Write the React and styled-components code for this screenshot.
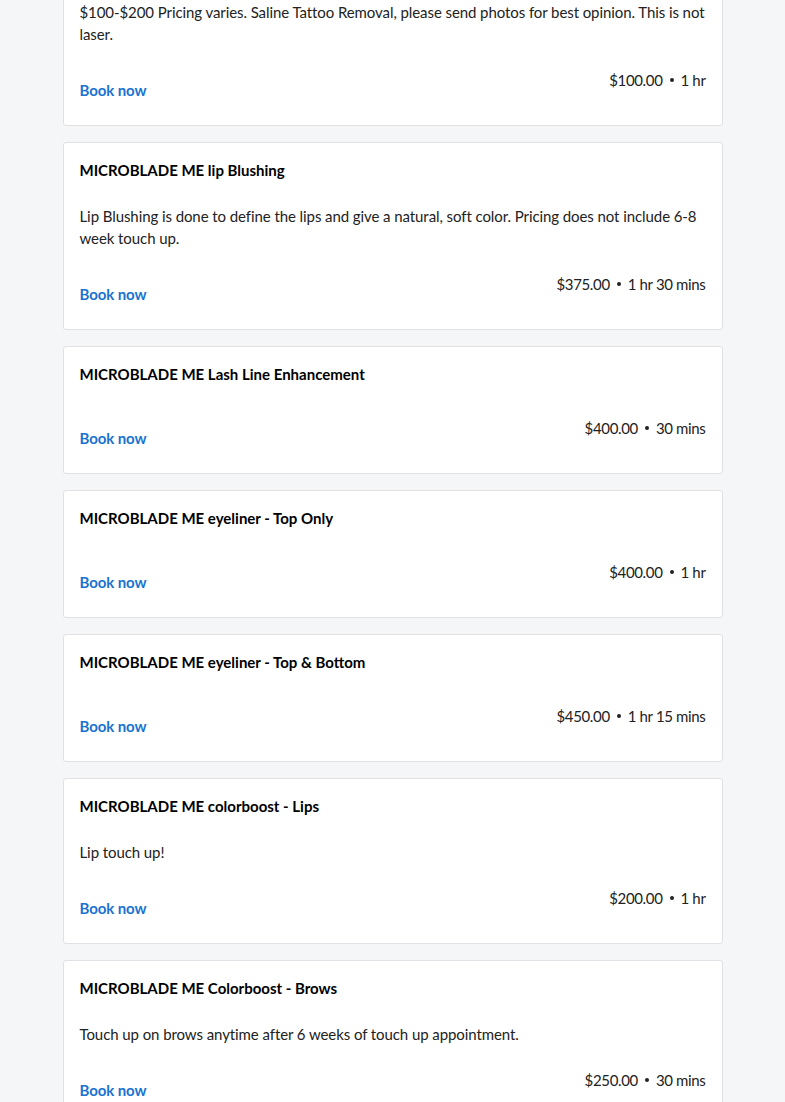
import React from "react";
import styled, { createGlobalStyle } from "styled-components";

const GlobalStyle = createGlobalStyle`
  html, body { margin: 0; padding: 0; background: #f5f6f7; }
  body { font-family: "Lato", "Noto Sans", sans-serif; color: #1a1a1a; -webkit-font-smoothing: antialiased; }
  * { box-sizing: border-box; }
`;

const Page = styled.main`
  background: #f5f6f7;
  min-height: 1102px;
  overflow: hidden;
`;

const List = styled.div`
  width: 660px;
  margin: -62px auto 0;
  display: flex;
  flex-direction: column;
  gap: 16px;
  padding-bottom: 40px;
`;

const Card = styled.section`
  display: flex;
  flex-direction: column;
  background: #ffffff;
  border: 1px solid #dfe1e5;
  border-radius: 3px;
  padding: 16px 16px 25px;
`;

const Title = styled.h3`
  margin: 0 0 8px;
  font-size: 15px;
  line-height: 22px;
  font-weight: 700;
  color: #000;
`;

const Description = styled.p`
  margin: 16px 0 0;
  font-size: 15px;
  line-height: 22px;
  letter-spacing: -0.08px;
  color: #222;
`;

const Footer = styled.div`
  margin-top: 25px;
  display: flex;
  justify-content: space-between;
  align-items: flex-start;
`;

const BookButton = styled.button`
  margin-top: 10px;
  padding: 0;
  border: none;
  background: none;
  font-family: inherit;
  font-size: 15px;
  line-height: 20px;
  font-weight: 700;
  letter-spacing: -0.1px;
  color: #1a73d1;
  cursor: pointer;
`;

const Meta = styled.div`
  display: flex;
  align-items: center;
  gap: 7px;
  font-size: 15px;
  line-height: 20px;
  letter-spacing: -0.35px;
  color: #222;
`;

const Dot = styled.span`
  width: 4px;
  height: 4px;
  border-radius: 50%;
  background: #222;
`;

const services = [
  {
    title: "MICROBLADE ME Saline Tattoo Removal",
    description:
      "$100-$200 Pricing varies. Saline Tattoo Removal, please send photos for best opinion. This is not laser.",
    price: "$100.00",
    duration: "1 hr",
  },
  {
    title: "MICROBLADE ME lip Blushing",
    description:
      "Lip Blushing is done to define the lips and give a natural, soft color. Pricing does not include 6-8 week touch up.",
    price: "$375.00",
    duration: "1 hr 30 mins",
  },
  { title: "MICROBLADE ME Lash Line Enhancement", price: "$400.00", duration: "30 mins" },
  { title: "MICROBLADE ME eyeliner - Top Only", price: "$400.00", duration: "1 hr" },
  { title: "MICROBLADE ME eyeliner - Top & Bottom", price: "$450.00", duration: "1 hr 15 mins" },
  {
    title: "MICROBLADE ME colorboost - Lips",
    description: "Lip touch up!",
    price: "$200.00",
    duration: "1 hr",
  },
  {
    title: "MICROBLADE ME Colorboost - Brows",
    description: "Touch up on brows anytime after 6 weeks of touch up appointment.",
    price: "$250.00",
    duration: "30 mins",
  },
];

export default function App() {
  return (
    <Page>
      <GlobalStyle />
      <List>
        {services.map((s) => (
          <Card key={s.title}>
            <Title>{s.title}</Title>
            {s.description && <Description>{s.description}</Description>}
            <Footer>
              <BookButton>Book now</BookButton>
              <Meta>
                <span>{s.price}</span>
                <Dot />
                <span>{s.duration}</span>
              </Meta>
            </Footer>
          </Card>
        ))}
      </List>
    </Page>
  );
}
